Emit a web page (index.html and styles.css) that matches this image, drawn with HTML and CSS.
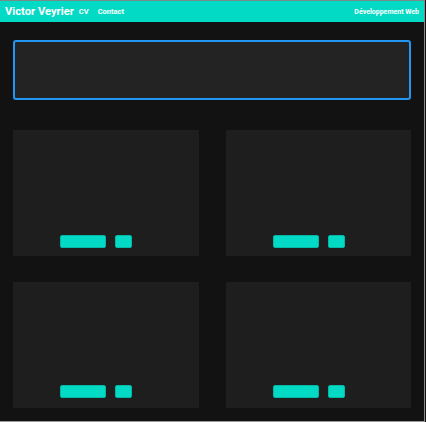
FILE: index.html
```html
<!DOCTYPE html>
<html>
<head>
    <link rel="stylesheet" href="styles.css">
</head>
<body>
    <div class="frame">
        <header class="topbar">
            <span class="brand">Victor Veyrier</span>
            <nav class="links">
                <a href="#">CV</a>
                <a href="#">Contact</a>
            </nav>
            <span class="tagline">Développement Web</span>
        </header>

        <main class="content">
            <div class="search-box"></div>

            <div class="cards">
                <div class="card">
                    <div class="actions">
                        <button class="btn-wide"></button>
                        <button class="btn-small"></button>
                    </div>
                </div>
                <div class="card">
                    <div class="actions">
                        <button class="btn-wide"></button>
                        <button class="btn-small"></button>
                    </div>
                </div>
                <div class="card card-low">
                    <div class="actions">
                        <button class="btn-wide"></button>
                        <button class="btn-small"></button>
                    </div>
                </div>
                <div class="card card-low">
                    <div class="actions">
                        <button class="btn-wide"></button>
                        <button class="btn-small"></button>
                    </div>
                </div>
            </div>
        </main>
    </div>
</body>
</html>
```

FILE: styles.css
```css
html, body {
    margin: 0;
    padding: 0;
    background-color: #121212;
}

body {
    font-family: Roboto, "Liberation Sans", sans-serif;
    color: #fff;
}

.frame {
    width: 424px;
    height: 420px;
    border-top: 1px solid #7a8a88;
    border-right: 1px solid #8a8a8a;
    border-bottom: 1px solid #9a9a9a;
    background-color: #121212;
    overflow: hidden;
}

.topbar {
    display: flex;
    align-items: center;
    height: 21px;
    padding: 0 5px 0 5px;
    background-color: #03dac5;
}

.brand {
    font-size: 11.2px;
    font-weight: bold;
}

.links {
    display: flex;
    gap: 9px;
    margin-left: 5px;
}

.links a {
    color: #fff;
    text-decoration: none;
    font-size: 7.5px;
    font-weight: bold;
}

.tagline {
    margin-left: auto;
    font-size: 7px;
    font-weight: bold;
}

.content {
    padding: 18px 13px 0 13px;
}

.search-box {
    height: 56px;
    background-color: #232323;
    border: 2px solid #2196f3;
    border-radius: 3px;
}

.cards {
    display: grid;
    grid-template-columns: 186px 185px;
    column-gap: 27px;
    row-gap: 26px;
    margin-top: 30px;
}

.card {
    height: 126px;
    background-color: #1e1e1e;
    display: flex;
    align-items: flex-end;
    padding: 0 0 8px 47px;
    box-sizing: border-box;
}

.card-low {
    padding-bottom: 10px;
}

.actions {
    display: flex;
    gap: 9px;
}

.actions button {
    height: 13px;
    border: 1px solid #02b8a6;
    border-radius: 2px;
    background-color: #03dac5;
    padding: 0;
    cursor: pointer;
}

.btn-wide {
    width: 46px;
}

.btn-small {
    width: 17px;
}
```
